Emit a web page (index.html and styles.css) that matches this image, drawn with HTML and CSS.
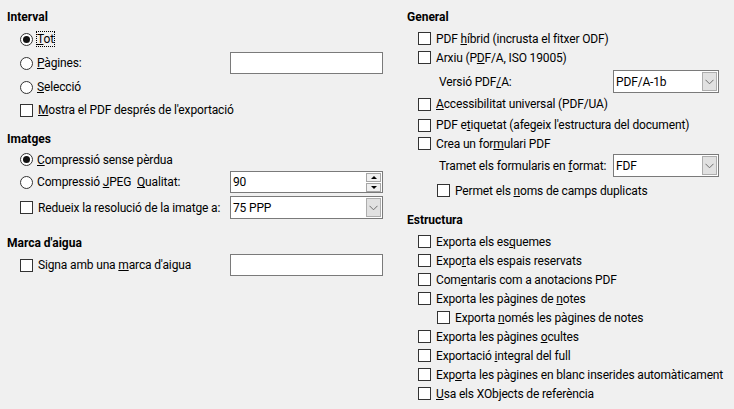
FILE: index.html
```html
<!DOCTYPE html>
<html lang="ca">
<head>
<meta charset="utf-8">
<title>Opcions PDF</title>
<link rel="stylesheet" href="styles.css">
</head>
<body>
<div class="page">
  <div class="col">
    <div class="heading h18">Interval</div>
    <div class="row h26 ind"><span class="radio on"></span><span class="lbl focus"><u>T</u>ot</span></div>
    <div class="row h22 ind field"><span class="opt"><span class="radio"></span><span class="lbl"><u>P</u>àgines:</span></span><span class="input"></span></div>
    <div class="row h26 ind"><span class="radio"></span><span class="lbl"><u>S</u>elecció</span></div>
    <div class="row h20 ind"><span class="check"></span><span class="lbl"><u>M</u>ostra el PDF després de l'exportació</span></div>

    <div class="heading h18 mt10">Imatges</div>
    <div class="row h23 ind"><span class="radio on"></span><span class="lbl"><u>C</u>ompressió sense pèrdua</span></div>
    <div class="row h22 ind field"><span class="opt"><span class="radio"></span><span class="lbl">Compressió <u>J</u>PEG&nbsp;&nbsp;<u>Q</u>ualitat:</span></span><span class="input spin"><span class="val">90</span><span class="spinbtns"><span class="sb up"></span><span class="sb down"></span></span></span></div>
    <div class="row h23 ind field mt3"><span class="opt"><span class="check"></span><span class="lbl">Redueix la resolució de la imat<u>g</u>e a:</span></span><span class="select wide"><span class="val">75 PPP</span><span class="drop"><svg width="9" height="6" viewBox="0 0 9 6"><path d="M0.5 0.8 L4.5 4.8 L8.5 0.8" fill="none" stroke="#6d6d6d" stroke-width="1"/></svg></span></span></div>

    <div class="heading h18 mt15">Marca d'aigua</div>
    <div class="row h22 ind field mt2"><span class="opt"><span class="check"></span><span class="lbl">Signa amb una <u>m</u>arca d'aigua</span></span><span class="input"></span></div>
  </div>

  <div class="col">
    <div class="heading h18">General</div>
    <div class="row h19 rind mt3"><span class="check"></span><span class="lbl">PDF <u>h</u>íbrid (incrusta el fitxer ODF)</span></div>
    <div class="row h19 rind"><span class="check"></span><span class="lbl">Arxiu (P<u>D</u>F/A, ISO 19005)</span></div>
    <div class="row h23 mt3 rfield sub"><span class="txt">Versió PDF<u>/</u>A:</span><span class="select narrow"><span class="val">PDF/A-1b</span><span class="drop"><svg width="9" height="6" viewBox="0 0 9 6"><path d="M0.5 0.8 L4.5 4.8 L8.5 0.8" fill="none" stroke="#6d6d6d" stroke-width="1"/></svg></span></span></div>
    <div class="row h20 rind mt1"><span class="check"></span><span class="lbl"><u>A</u>ccessibilitat universal (PDF/UA)</span></div>
    <div class="row h20 rind mt1"><span class="check"></span><span class="lbl">PDF e<u>t</u>iquetat (afegeix l'estructura del document)</span></div>
    <div class="row h17 rind"><span class="check"></span><span class="lbl">Crea un for<u>m</u>ulari PDF</span></div>
    <div class="row h21 mt3 rfield sub"><span class="txt">Tramet els formularis en <u>f</u>ormat:</span><span class="select narrow"><span class="val">FDF</span><span class="drop"><svg width="9" height="6" viewBox="0 0 9 6"><path d="M0.5 0.8 L4.5 4.8 L8.5 0.8" fill="none" stroke="#6d6d6d" stroke-width="1"/></svg></span></span></div>
    <div class="row h19 mt5 subchk"><span class="check"></span><span class="lbl">Permet els <u>n</u>oms de camps duplicats</span></div>

    <div class="heading h18 mt11">Estructura</div>
    <div class="list">
      <div class="row h19 rind"><span class="check"></span><span class="lbl">Exporta els es<u>q</u>uemes</span></div>
      <div class="row h19 rind"><span class="check"></span><span class="lbl">Expo<u>r</u>ta els espais reservats</span></div>
      <div class="row h19 rind"><span class="check"></span><span class="lbl">Com<u>e</u>ntaris com a anotacions PDF</span></div>
      <div class="row h19 rind"><span class="check"></span><span class="lbl">Exporta les pàgines de <u>n</u>otes</span></div>
      <div class="row h19 subchk"><span class="check"></span><span class="lbl">Exporta <u>n</u>omés les pàgines de notes</span></div>
      <div class="row h19 rind"><span class="check"></span><span class="lbl">Exporta les pàgines <u>o</u>cultes</span></div>
      <div class="row h19 rind"><span class="check"></span><span class="lbl">Exportació <u>i</u>ntegral del full</span></div>
      <div class="row h19 rind"><span class="check"></span><span class="lbl">Exp<u>o</u>rta les pàgines en blanc inserides automàticament</span></div>
      <div class="row h19 rind"><span class="check"></span><span class="lbl"><u>U</u>sa els XObjects de referència</span></div>
    </div>
  </div>
</div>
</body>
</html>
```

FILE: styles.css
```css
html, body {
  margin: 0;
  padding: 0;
}
body {
  background: #f0f0f0;
  color: #000;
  font-family: Roboto, "Liberation Sans", sans-serif;
  font-size: 12px;
  letter-spacing: -0.15px;
  width: 734px;
  height: 409px;
  overflow: hidden;
}
u {
  text-decoration: underline;
  text-underline-offset: 1px;
}
.page {
  display: grid;
  grid-template-columns: 400px 334px;
}
.col {
  padding: 8px 0 0 7px;
  display: flex;
  flex-direction: column;
}
.heading {
  font-weight: bold;
  letter-spacing: 0;
  display: flex;
  align-items: center;
}
.row {
  display: flex;
  align-items: center;
}
.h17 { height: 17px; }
.h18 { height: 18px; }
.h19 { height: 19px; }
.h20 { height: 20px; }
.h21 { height: 21px; }
.h22 { height: 22px; }
.h23 { height: 23px; }
.h26 { height: 26px; }
.mt1 { margin-top: 1px; }
.mt2 { margin-top: 2px; }
.mt3 { margin-top: 3px; }
.mt5 { margin-top: 5px; }
.mt10 { margin-top: 10px; }
.mt11 { margin-top: 11px; }
.mt15 { margin-top: 15px; }

.ind { padding-left: 13px; }
.rind { padding-left: 11px; }
.sub { padding-left: 32px; }
.subchk { padding-left: 30px; }

.field {
  width: 363px;
  justify-content: space-between;
}
.rfield {
  width: 280px;
  justify-content: space-between;
}
.opt {
  display: flex;
  align-items: center;
}

.radio {
  width: 11px;
  height: 11px;
  border: 1px solid #333;
  border-radius: 50%;
  background: #fff;
  box-sizing: content-box;
  margin-right: 4px;
  position: relative;
  flex: none;
}
.radio.on::after {
  content: "";
  position: absolute;
  left: 2px;
  top: 2px;
  width: 7px;
  height: 7px;
  border-radius: 50%;
  background: #111;
}
.check {
  width: 11px;
  height: 11px;
  border: 1px solid #333;
  background: #fff;
  margin-right: 5px;
  flex: none;
}
.lbl, .txt {
  white-space: nowrap;
  line-height: 14px;
}
.focus {
  outline: 1px dotted #000;
  outline-offset: 0;
}

.input {
  width: 151px;
  height: 20px;
  border: 1px solid #7a7a7a;
  background: #fff;
  display: flex;
  align-items: center;
  flex: none;
}
.val {
  padding-left: 2px;
  flex: 1;
}
.spinbtns {
  display: flex;
  flex-direction: column;
  margin-right: 1px;
}
.sb {
  width: 13px;
  height: 7px;
  border: 1px solid #a6a6a6;
  background: #f0f0f0;
  position: relative;
}
.sb.up { margin-bottom: 1px; }
.sb::after {
  content: "";
  position: absolute;
  left: 4px;
  width: 0;
  height: 0;
  border-left: 3px solid transparent;
  border-right: 3px solid transparent;
}
.sb.up::after {
  top: 2px;
  border-bottom: 3px solid #000;
}
.sb.down::after {
  top: 2px;
  border-top: 3px solid #000;
}

.select {
  height: 21px;
  border: 1px solid #7a7a7a;
  background: #fff;
  display: flex;
  align-items: center;
  flex: none;
}
.select.wide { width: 151px; }
.select.narrow { width: 104px; }
.drop {
  width: 15px;
  height: 19px;
  margin-right: 1px;
  border: 1px solid #adadad;
  background: #e1e1e1;
  display: flex;
  align-items: center;
  justify-content: center;
  box-sizing: border-box;
}
.list {
  margin-top: 3px;
  display: flex;
  flex-direction: column;
}
```
